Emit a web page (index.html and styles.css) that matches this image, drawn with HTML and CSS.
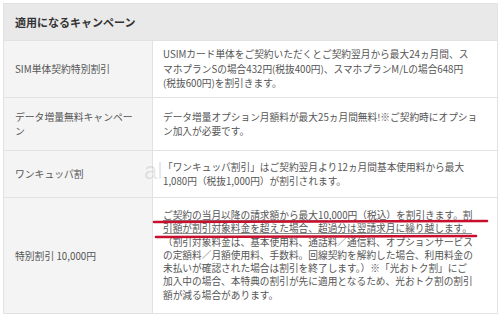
FILE: index.html
```html
<!DOCTYPE html>
<html lang="ja">
<head>
<meta charset="utf-8">
<link rel="stylesheet" href="styles.css">
</head>
<body>
<div class="wrap">
<table class="camp">
  <colgroup>
    <col class="c-lab">
    <col class="c-val">
  </colgroup>
  <thead>
    <tr class="r-head"><th colspan="2">適用になるキャンペーン</th></tr>
  </thead>
  <tbody>
    <tr class="r1">
      <td class="lab">SIM単体契約特別割引</td>
      <td class="val">USIMカード単体をご契約いただくとご契約翌月から最大24ヵ月間、ス<br>マホプランSの場合432円(税抜400円)、スマホプランM/Lの場合648円<br>(税抜600円)を割引きます。</td>
    </tr>
    <tr class="r2">
      <td class="lab">データ増量無料キャンペー<br>ン</td>
      <td class="val">データ増量オプション月額料が最大25ヵ月間無料!※ご契約時にオプショ<br>ン加入が必要です。</td>
    </tr>
    <tr class="r3">
      <td class="lab">ワンキュッパ割</td>
      <td class="val">「ワンキュッパ割引」はご契約翌月より12ヵ月間基本使用料から最大<br>1,080円（税抜1,000円）が割引されます。</td>
    </tr>
    <tr class="r4">
      <td class="lab">特別割引 10,000円</td>
      <td class="val dense"><span class="ul">ご契約の当月以降の請求額から最大10,000円（税込）を割引きます。割<br>引額が割引対象料金を超えた場合、超過分は翌請求月に繰り越します。</span><br>（割引対象料金は、基本使用料、通話料／通信料、オプションサービス<br>の定額料／月額使用料、手数料。回線契約を解約した場合、利用料金の<br>未払いが確認された場合は割引を終了します。）※「光おトク割」にご<br>加入中の場合、本特典の割引が先に適用となるため、光おトク割の割引<br>額が減る場合があります。</td>
    </tr>
  </tbody>
</table>
<span class="watermark">al</span>
<svg class="redmarks" width="500" height="318" viewBox="0 0 500 318">
  <path d="M154 222 L487 221" stroke="#c8102e" stroke-width="2.6" fill="none" stroke-linecap="round"/>
  <path d="M156 237 L476 236" stroke="#c8102e" stroke-width="2.6" fill="none" stroke-linecap="round"/>
</svg>
</div>
</body>
</html>
```

FILE: styles.css
```css
html, body {
  margin: 0;
  padding: 0;
  background: #ffffff;
}
.wrap {
  position: relative;
  width: 500px;
  height: 318px;
  padding: 3px 0 0 3px;
  box-sizing: border-box;
}
.camp {
  border-collapse: collapse;
  width: 494px;
  table-layout: fixed;
  font-family: "Noto Sans CJK JP", "Noto Sans", sans-serif;
  color: #555555;
}
.c-lab { width: 149px; }
.c-val { width: 345px; }
.camp th, .camp td {
  border: 1px solid #e2e2e2;
  vertical-align: middle;
  text-align: left;
}
.r-head th {
  background: #e9e9e9;
  color: #333333;
  font-size: 11px;
  font-weight: bold;
  height: 36px;
  padding: 0 0 0 11px;
  line-height: 14px;
}
.lab {
  background: #f4f4f4;
  padding: 0 0 0 11px;
  font-size: 9.8px;
  line-height: 14px;
}
.val {
  background: #ffffff;
  padding: 0 0 0 10px;
  font-size: 9.7px;
  line-height: 14.5px;
  white-space: nowrap;
  overflow: hidden;
}
.val.dense {
  line-height: 13.3px;
}
.r1 td { height: 56px; }
.r2 td { height: 52px; }
.r3 td { height: 46px; }
.r4 td { height: 115px; }
.ul {
  text-decoration: underline;
  text-decoration-color: #888;
}
.watermark {
  position: absolute;
  left: 144px;
  top: 157px;
  font-family: "Liberation Sans", sans-serif;
  font-size: 24px;
  color: rgba(0, 0, 0, 0.1);
}
.redmarks {
  position: absolute;
  left: 0;
  top: 0;
  pointer-events: none;
}
```
